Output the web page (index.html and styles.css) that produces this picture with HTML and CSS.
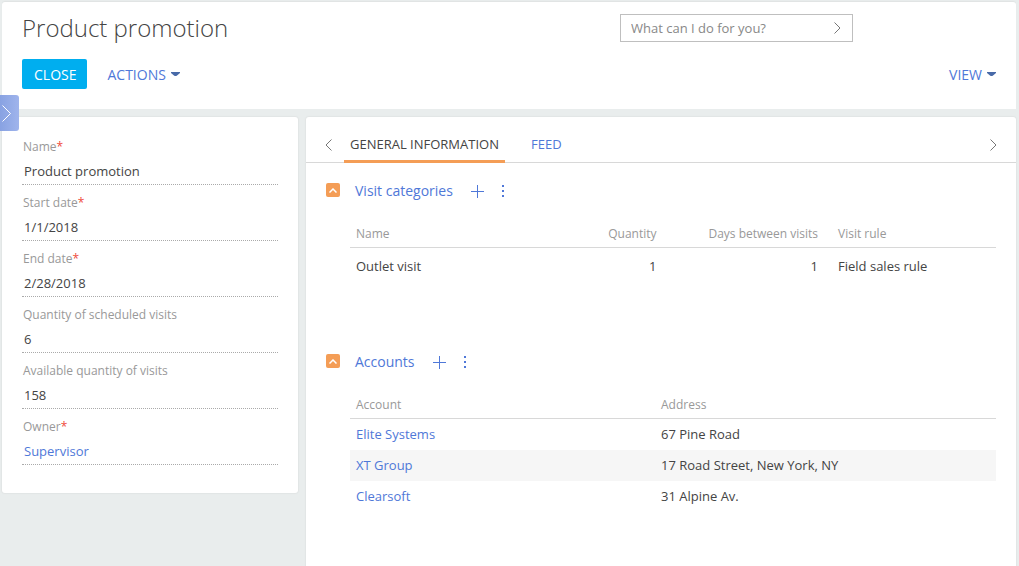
FILE: index.html
```html
<!DOCTYPE html>
<html lang="en">
<head>
<meta charset="utf-8">
<meta name="viewport" content="width=device-width, initial-scale=1">
<title>Product promotion</title>
<link rel="stylesheet" href="styles.css">
</head>
<body>
<div class="page">
  <header class="header">
    <div class="header-row">
      <h1 class="title">Product promotion</h1>
      <form class="command">
        <input class="command-input" type="text" placeholder="What can I do for you?" aria-label="What can I do for you?">
        <button class="icon-button command-go" type="button" aria-label="Run">
          <svg class="chevron" viewBox="0 0 7 12"><path d="M0.5 0.5L6 6L0.5 11.5"/></svg>
        </button>
      </form>
    </div>
    <div class="toolbar">
      <button class="button-primary" type="button">CLOSE</button>
      <button class="button-menu" type="button">ACTIONS <svg class="caret" viewBox="0 0 9 5"><path d="M0 0H9V1L6 3.5Q4.5 4.5 3 3.5L0 1Z"/></svg></button>
      <button class="button-menu view-menu" type="button">VIEW <svg class="caret" viewBox="0 0 9 5"><path d="M0 0H9V1L6 3.5Q4.5 4.5 3 3.5L0 1Z"/></svg></button>
    </div>
  </header>

  <button class="panel-toggle" type="button" aria-label="Expand panel">
    <svg class="panel-chevron" viewBox="0 0 9 17"><path d="M0.5 0.5L8.5 8.5L0.5 16.5"/></svg>
  </button>

  <div class="columns">
    <aside class="card profile">
      <div class="field"><label class="label" for="name">Name<span class="required">*</span></label><input class="value" id="name" type="text" value="Product promotion"></div>
      <div class="field"><label class="label" for="start">Start date<span class="required">*</span></label><input class="value" id="start" type="text" value="1/1/2018"></div>
      <div class="field"><label class="label" for="end">End date<span class="required">*</span></label><input class="value" id="end" type="text" value="2/28/2018"></div>
      <div class="field"><label class="label" for="scheduled">Quantity of scheduled visits</label><input class="value" id="scheduled" type="text" value="6"></div>
      <div class="field"><label class="label" for="available">Available quantity of visits</label><input class="value" id="available" type="text" value="158"></div>
      <div class="field"><span class="label" id="owner-label">Owner<span class="required">*</span></span><a class="value link" id="owner" href="#" aria-labelledby="owner-label owner">Supervisor</a></div>
    </aside>

    <main class="card main">
      <nav class="tabs">
        <button class="icon-button" type="button" aria-label="Previous tab"><svg class="chevron" viewBox="0 0 7 12"><path d="M6.5 0.5L1 6L6.5 11.5"/></svg></button>
        <button class="tab tab-active" type="button">GENERAL INFORMATION</button>
        <button class="tab" type="button">FEED</button>
        <button class="icon-button tabs-next" type="button" aria-label="Next tab"><svg class="chevron" viewBox="0 0 7 12"><path d="M0.5 0.5L6 6L0.5 11.5"/></svg></button>
      </nav>

      <section class="detail detail-visits">
        <div class="detail-head">
          <button class="collapse" type="button" aria-label="Collapse Visit categories"><svg class="collapse-icon" viewBox="0 0 8 5"><path d="M0.5 4.5L4 1L7.5 4.5"/></svg></button>
          <h2 class="detail-title">Visit categories</h2>
          <button class="icon-button" type="button" aria-label="Add visit category"><svg class="plus" viewBox="0 0 13 13"><path d="M6.5 0V13M0 6.5H13"/></svg></button>
          <button class="icon-button more" type="button" aria-label="More"><svg class="dots" viewBox="0 0 2 12"><path d="M0 0H2V2H0ZM0 5H2V7H0ZM0 10H2V12H0Z"/></svg></button>
        </div>
        <table class="grid visits">
          <colgroup><col class="col-name"><col class="col-quantity"><col class="col-days"><col></colgroup>
          <thead><tr><th>Name</th><th class="number">Quantity</th><th class="number">Days between visits</th><th class="rule">Visit rule</th></tr></thead>
          <tbody><tr><td>Outlet visit</td><td class="number">1</td><td class="number">1</td><td class="rule">Field sales rule</td></tr></tbody>
        </table>
      </section>

      <section class="detail">
        <div class="detail-head">
          <button class="collapse" type="button" aria-label="Collapse Accounts"><svg class="collapse-icon" viewBox="0 0 8 5"><path d="M0.5 4.5L4 1L7.5 4.5"/></svg></button>
          <h2 class="detail-title">Accounts</h2>
          <button class="icon-button" type="button" aria-label="Add account"><svg class="plus" viewBox="0 0 13 13"><path d="M6.5 0V13M0 6.5H13"/></svg></button>
          <button class="icon-button more" type="button" aria-label="More"><svg class="dots" viewBox="0 0 2 12"><path d="M0 0H2V2H0ZM0 5H2V7H0ZM0 10H2V12H0Z"/></svg></button>
        </div>
        <table class="grid accounts">
          <colgroup><col class="col-account"><col></colgroup>
          <thead><tr><th>Account</th><th>Address</th></tr></thead>
          <tbody>
            <tr><td><a class="link" href="#">Elite Systems</a></td><td>67 Pine Road</td></tr>
            <tr><td><a class="link" href="#">XT Group</a></td><td>17 Road Street, New York, NY</td></tr>
            <tr><td><a class="link" href="#">Clearsoft</a></td><td>31 Alpine Av.</td></tr>
          </tbody>
        </table>
      </section>
    </main>
  </div>
</div>
</body>
</html>
```
FILE: styles.css
```css
* {
  box-sizing: border-box;
}

body {
  margin: 0;
  background: #e9eded;
  color: #444;
  font: 13px/20px "Open Sans", "Noto Sans", sans-serif;
}

button,
input {
  margin: 0;
  padding: 0;
  border: 0;
  background: none;
  color: inherit;
  font: inherit;
}

button {
  cursor: pointer;
}

svg {
  display: block;
  fill: none;
}

.page {
  position: relative;
  display: flex;
  flex-direction: column;
  gap: 8px;
  min-height: 100vh;
  padding: 2px 3px 0 2px;
}

.header,
.card {
  background: #fff;
  border-radius: 3px;
  box-shadow: 0 0 1px 1px #e2e5e5;
}

.header {
  padding: 12px 20px 20px;
  border-radius: 3px 3px 0 0;
  box-shadow: 0 -1px 1px #e0e3e3;
}

.header-row {
  display: flex;
  align-items: flex-start;
  justify-content: space-between;
  height: 45px;
}

.title {
  margin: 0;
  font-size: 24px;
  line-height: 28px;
  font-weight: 300;
}

.command {
  display: flex;
  width: 233px;
  height: 28px;
  margin-right: 143px;
  border: 1px solid #bfbfbf;
}

.command-input {
  flex: 1;
  min-width: 0;
  padding-left: 10px;
  outline: 0;
}

.command-input::placeholder {
  color: #888;
  opacity: 1;
}

.command-go {
  padding: 0 11px;
}

.icon-button {
  display: flex;
  align-items: center;
}

.chevron {
  width: 7px;
  height: 12px;
  stroke: #777;
  stroke-width: 1;
}

.toolbar {
  display: flex;
  align-items: center;
  font-size: 14px;
}

.button-primary {
  height: 30px;
  padding: 2px 11px 0 12px;
  border-radius: 2px;
  background: #00aeef;
  color: #fff;
}

.button-menu {
  display: flex;
  align-items: center;
  gap: 5px;
  height: 30px;
  margin-left: 20px;
  padding-top: 2px;
  color: #4f78d8;
}

.view-menu {
  margin-left: auto;
}

.caret {
  width: 9px;
  height: 5px;
  margin-bottom: 2px;
  fill: #486aa8;
}

.panel-toggle {
  position: absolute;
  top: 95px;
  left: 0;
  width: 19px;
  height: 36px;
  padding-left: 2px;
  border-radius: 0 3px 3px 0;
  background: linear-gradient(90deg, #88a2e2, #9fb4ec);
}

.panel-chevron {
  width: 9px;
  height: 17px;
  stroke: #fff;
}

.columns {
  display: flex;
  flex: 1;
  align-items: flex-start;
  gap: 8px;
}

.profile {
  display: flex;
  flex: 0 0 296px;
  flex-direction: column;
  gap: 8px;
  padding: 20px 20px 28px;
}

.field {
  display: flex;
  flex-direction: column;
}

.label {
  padding-left: 1px;
  color: #999;
  font-size: 12px;
}

.required {
  color: #ef4a3c;
}

.value {
  height: 28px;
  padding: 0 2px;
  border-bottom: 1px dotted #aaa;
  line-height: 28px;
  outline: 0;
}

.link {
  color: #4f78d8;
  text-decoration: none;
}

.main {
  flex: 1;
  align-self: stretch;
  min-width: 0;
  border-radius: 3px 3px 0 0;
}

.tabs {
  display: flex;
  height: 46px;
  padding: 0 19px;
  border-bottom: 1px solid #d8d8d8;
}

.tabs .icon-button {
  padding-top: 10px;
}

.tab {
  height: 46px;
  margin-left: 20px;
  padding: 11px 6px 0;
  border-bottom: 3px solid transparent;
  color: #4f78d8;
}

.tab-active {
  margin-left: 12px;
  border-bottom-color: #f49d56;
  color: #444;
}

.tabs .tabs-next {
  margin-left: auto;
}

.detail {
  padding: 18px 20px 0;
}

.detail-visits {
  min-height: 171px;
}

.detail-head {
  display: flex;
  align-items: center;
  height: 20px;
}

.collapse {
  display: flex;
  align-items: center;
  justify-content: center;
  width: 14px;
  height: 14px;
  margin-bottom: 2px;
  border-radius: 2px;
  background: #f49d56;
}

.collapse-icon {
  width: 8px;
  height: 5px;
  stroke: #fff;
  stroke-width: 1.5;
}

.detail-title {
  margin: 0 18px 0 15px;
  color: #4f78d8;
  font-size: 14px;
  font-weight: 400;
}

.plus {
  width: 13px;
  height: 13px;
  stroke: #4f78d8;
}

.more {
  margin-left: 18px;
}

.dots {
  width: 2px;
  height: 12px;
  fill: #4f78d8;
}

.grid {
  width: calc(100% - 24px);
  margin: 19px 0 0 24px;
  border-collapse: separate;
  border-spacing: 0;
  table-layout: fixed;
}

.grid th,
.grid td {
  padding: 0 6px;
  text-align: left;
}

.grid th {
  height: 28px;
  border-bottom: 1px solid #d8d8d8;
  color: #999;
  font-size: 12px;
  font-weight: 400;
}

.grid td {
  height: 31px;
  padding-bottom: 2px;
}

.grid .number {
  padding-right: 10px;
  text-align: right;
}

.grid .rule {
  padding-left: 10px;
}

.visits td {
  height: 37px;
}

.accounts tr:nth-child(even) td {
  background: #f6f6f6;
}

.col-name {
  width: 24%;
}

.col-quantity,
.col-days {
  width: 25%;
}

.col-account {
  width: 305px;
}
```
